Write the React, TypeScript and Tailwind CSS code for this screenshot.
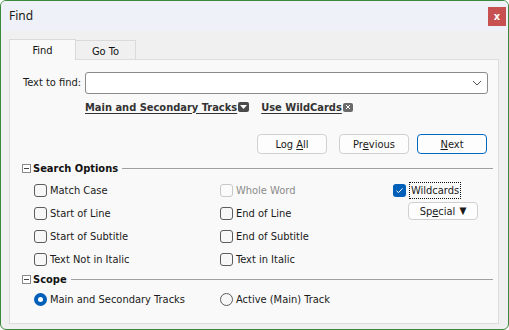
import React from 'react';

const ui = "font-['DejaVu_Sans_Condensed','Liberation_Sans',sans-serif]";

function Check({ checked = false, disabled = false }: { checked?: boolean; disabled?: boolean }) {
  if (checked) {
    return (
      <span className="flex h-[13px] w-[13px] items-center justify-center rounded-[3px] bg-[#005fb8]">
        <svg width="9" height="9" viewBox="0 0 9 9">
          <path d="M1.5 4.8 L3.5 6.6 L7.5 2.4" fill="none" stroke="#fff" strokeWidth="1" />
        </svg>
      </span>
    );
  }
  return (
    <span
      className={
        disabled
          ? 'h-[13px] w-[13px] rounded-[3px] border border-[#c8c8c8] bg-[#fbfbfb]'
          : 'h-[13px] w-[13px] rounded-[3px] border border-[#5c5c5c] bg-[#f7f7f7]'
      }
    />
  );
}

function Option({ label, checked, disabled }: { label: string; checked?: boolean; disabled?: boolean }) {
  return (
    <div className="flex h-[23px] items-center gap-[3px]">
      <Check checked={checked} disabled={disabled} />
      <span className={disabled ? 'text-[#8c8c8c]' : 'text-[#1a1a1a]'}>{label}</span>
    </div>
  );
}

function Radio({ label, checked }: { label: string; checked?: boolean }) {
  return (
    <div className="flex h-[20px] w-[186px] items-center gap-[3px]">
      {checked ? (
        <span className="flex h-[13px] w-[13px] items-center justify-center rounded-full bg-[#005fb8]">
          <span className="h-[5px] w-[5px] rounded-full bg-white" />
        </span>
      ) : (
        <span className="h-[13px] w-[13px] rounded-full border border-[#5c5c5c] bg-[#f7f7f7]" />
      )}
      <span className="text-[#1a1a1a]">{label}</span>
    </div>
  );
}

function Group({ title }: { title: string }) {
  return (
    <div className="ml-[12px] flex h-[13px] items-center">
      <span className="flex h-[9px] w-[9px] items-center justify-center border border-[#8a8a8a] bg-white">
        <span className="h-px w-[5px] bg-[#444]" />
      </span>
      <span className="ml-[2px] font-bold text-[#111]">{title}</span>
      <span className="ml-[4px] mr-[5px] h-px flex-1 bg-[#a0a0a0]" />
    </div>
  );
}

function Btn({ children, primary }: { children: React.ReactNode; primary?: boolean }) {
  return (
    <div
      className={
        primary
          ? 'flex h-[20px] w-[70px] items-center justify-center rounded-[4px] border border-[#0067c0] bg-[#fdfdfd] text-[#1a1a1a]'
          : 'flex h-[20px] w-[70px] items-center justify-center rounded-[4px] border border-[#d0d0d0] bg-[#fdfdfd] text-[#1a1a1a]'
      }
    >
      <span>{children}</span>
    </div>
  );
}

export default function App() {
  return (
    <div className={`h-[330px] w-[509px] overflow-hidden rounded-[6px] border border-[#3b8a3b] bg-[#f0f0f0] text-[11px] leading-none ${ui}`}>
      <div className="flex h-[30px] items-center justify-between bg-[#eef2f8] pl-[8px] pr-[2px]">
        <span className="font-['Noto_Sans','Liberation_Sans',sans-serif] text-[12px] text-[#1a1a1a]">Find</span>
        <div className="mt-[1px] flex h-[19px] w-[18px] items-center justify-center bg-[#c75050] text-[11px] font-bold text-white">
          x
        </div>
      </div>

      <div className="px-[8px] pt-[8px]">
        <div className="flex items-end">
          <div className="z-10 -mb-px flex h-[21px] w-[67px] items-center justify-center border border-b-0 border-[#dadada] bg-[#f9f9f9] text-[#111]">
            Find
          </div>
          <div className="flex h-[19px] w-[60px] items-center justify-center border border-b-0 border-l-0 border-[#dadada] bg-[#f0f0f0] pt-[2px] text-[#111]">
            Go To
          </div>
        </div>

        <div className="h-[265px] w-[490px] border border-[#dcdcdc] bg-[#f9f9f9]">
          <div className="mt-[12px] flex items-center">
            <span className="ml-[13px] w-[62px] pb-[2px] text-[#1a1a1a]">Text to find:</span>
            <div className="flex h-[22px] w-[403px] items-center justify-end rounded-[3px] border border-[#8a8a8a] bg-white pr-[5px]">
              <svg width="10" height="6" viewBox="0 0 10 6">
                <path d="M1 1 L5 5 L9 1" fill="none" stroke="#555" strokeWidth="1" />
              </svg>
            </div>
          </div>

          <div className="ml-[75px] mt-[6px] flex h-[14px] items-center font-bold text-[#333]">
            <span className="underline underline-offset-[2px]">Main and Secondary Tracks</span>
            <span className="ml-px flex h-[10px] w-[11px] items-center justify-center rounded-[2px] bg-[#4a4a4a]">
              <svg width="7" height="4" viewBox="0 0 7 4">
                <path d="M0 0 H7 L3.5 4 Z" fill="#fff" />
              </svg>
            </span>
            <span className="ml-[12px] underline underline-offset-[2px]">Use WildCards</span>
            <span className="ml-px flex h-[9px] w-[10px] items-center justify-center rounded-[2px] bg-[#6a6a6a]">
              <svg width="6" height="6" viewBox="0 0 6 6">
                <path d="M1 1 L5 5 M5 1 L1 5" fill="none" stroke="#fff" strokeWidth="1" />
              </svg>
            </span>
          </div>

          <div className="ml-[247px] mt-[20px] flex">
            <Btn>
              Log <span className="underline">A</span>ll
            </Btn>
            <div className="ml-[12px]">
              <Btn>
                Pr<span className="underline">e</span>vious
              </Btn>
            </div>
            <div className="ml-[8px]">
              <Btn primary>
                <span className="underline">N</span>ext
              </Btn>
            </div>
          </div>

          <div className="mt-[8px]">
            <Group title="Search Options" />
          </div>

          <div className="ml-[24px] mt-[4px] flex">
            <div className="flex w-[186px] flex-col">
              <Option label="Match Case" />
              <Option label="Start of Line" />
              <Option label="Start of Subtitle" />
              <Option label="Text Not in Italic" />
            </div>
            <div className="flex w-[173px] flex-col">
              <Option label="Whole Word" disabled />
              <Option label="End of Line" />
              <Option label="End of Subtitle" />
              <Option label="Text in Italic" />
            </div>
            <div className="flex flex-col">
              <div className="flex h-[23px] items-center gap-[3px]">
                <Check checked />
                <span className="border border-dotted border-[#111] px-px py-[2px] text-[#1a1a1a]">Wildcards</span>
              </div>
              <div className="ml-[15px] flex h-[18px] w-[70px] items-center justify-center rounded-[4px] border border-[#d0d0d0] bg-[#fdfdfd] text-[#1a1a1a]">
                <span>
                  Sp<span className="underline">e</span>cial
                </span>
                <span className="ml-[4px] text-[10px]">▼</span>
              </div>
            </div>
          </div>

          <div className="mt-[2px]">
            <Group title="Scope" />
          </div>

          <div className="ml-[24px] mt-[3px] flex">
            <Radio label="Main and Secondary Tracks" checked />
            <Radio label="Active (Main) Track" />
          </div>
        </div>
      </div>
    </div>
  );
}
